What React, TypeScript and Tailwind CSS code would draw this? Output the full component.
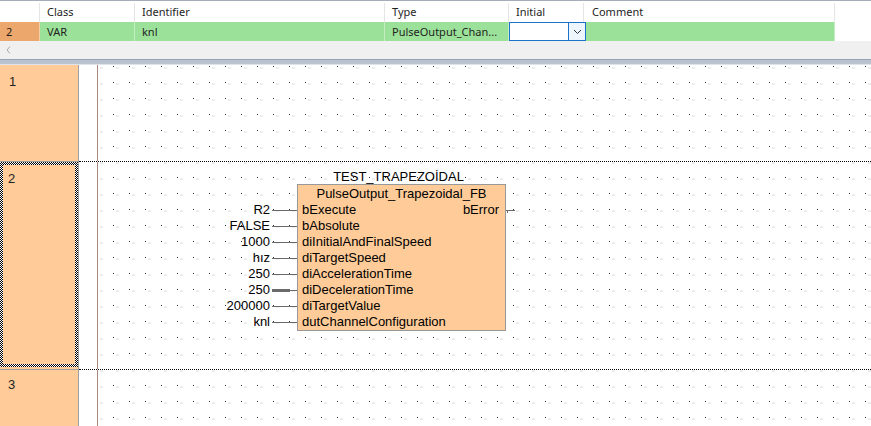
import React from 'react';

const cols = [
  { label: 'Class', w: 'w-[95px]', pl: 'pl-[7px]', value: 'VAR' },
  { label: 'Identifier', w: 'w-[250px]', pl: 'pl-[7px]', value: 'knl' },
  { label: 'Type', w: 'w-[124px]', pl: 'pl-[7px]', value: 'PulseOutput_Chan...' },
  { label: 'Initial', w: 'w-[75px]', pl: 'pl-[7px]', value: '' },
  { label: 'Comment', w: 'w-[251px]', pl: 'pl-[8px]', value: '' },
];

const pins: { value: string; name: string; selected?: boolean }[] = [
  { value: 'R2', name: 'bExecute' },
  { value: 'FALSE', name: 'bAbsolute' },
  { value: '1000', name: 'diInitialAndFinalSpeed' },
  { value: 'hız', name: 'diTargetSpeed' },
  { value: '250', name: 'diAccelerationTime' },
  { value: '250', name: 'diDecelerationTime', selected: true },
  { value: '200000', name: 'diTargetValue' },
  { value: 'knl', name: 'dutChannelConfiguration' },
];

// dotted canvas behind a network
const Dots: React.FC<{ id: string; oy: number }> = ({ id, oy }) => (
  <svg className="absolute inset-0 w-full h-full pointer-events-none">
    <defs>
      <pattern id={id} x={15} y={oy} width={16} height={16} patternUnits="userSpaceOnUse">
        <rect x={0} y={0} width={1} height={1} fill="#2e2e2e" />
        <rect x={3} y={1} width={3} height={2} fill="#ededed" />
      </pattern>
    </defs>
    <rect width="100%" height="100%" fill={`url(#${id})`} />
  </svg>
);

const Separator: React.FC = () => (
  <div className="flex h-px shrink-0">
    <div className="w-[79px] bg-[#a0a0a0]" />
    <div className="flex-1 border-t border-dotted border-black" />
  </div>
);

const FunctionBlock: React.FC = () => (
  <div className="absolute left-[102px] top-[8px] flex font-['Liberation_Sans',Arial,sans-serif] text-[13px] text-black">
    {/* constants on the inputs */}
    <div className="w-[70px] pt-[32px]">
      {pins.map((p, i) => (
        <div key={i} className="h-[16px] leading-[16px] text-right">{p.value}</div>
      ))}
    </div>
    {/* wires */}
    <div className="w-[27px] pt-[32px]">
      <svg width="27" height="128" className="block">
        {pins.map((p, i) =>
          p.selected ? (
            <g key={i}>
              <rect x="2" y={i * 16 + 7} width="18" height="3" fill="#6a6a6a" />
              <rect x="20" y={i * 16 + 8} width="7" height="1" fill="#6a6a6a" />
            </g>
          ) : (
            <rect key={i} x="2" y={i * 16 + 8} width="25" height="1" fill="#6a6a6a" />
          )
        )}
      </svg>
    </div>
    <div className="w-[209px] flex flex-col">
      <div className="h-[14px] leading-[14px] text-center pr-[6px]">TEST_TRAPEZOİDAL</div>
      <div className="border border-[#999] bg-[#ffcc99]">
        <div className="h-[17px] leading-[17px] text-center">PulseOutput_Trapezoidal_FB</div>
        {pins.map((p, i) => (
          <div key={i} className="h-[16px] leading-[16px] flex justify-between pl-[4px] pr-[6px]">
            <span>{p.name}</span>
            {i === 0 && <span>bError</span>}
          </div>
        ))}
      </div>
    </div>
    <div className="pt-[32px]">
      <svg width="10" height="16" className="block">
        <rect x="0" y="8" width="9" height="1" fill="#6a6a6a" />
        <rect x="1" y="8" width="1" height="3" fill="#6a6a6a" />
      </svg>
    </div>
  </div>
);

export default function App() {
  return (
    <div className="w-[871px] h-[426px] overflow-hidden bg-white flex flex-col">
      {/* declaration grid */}
      <div className="h-[22px] shrink-0 flex border-t border-[#a3acb9] pt-[2px] font-['Noto_Sans',sans-serif] text-[11px] text-[#1e1e1e]">
        <div className="w-[40px] border-r border-[#e5e5e5]" />
        {cols.map((c) => (
          <div key={c.label} className={`${c.w} ${c.pl} border-r border-[#e5e5e5] flex items-center`}>
            {c.label}
          </div>
        ))}
        <div className="flex-1" />
      </div>
      <div className="h-[19px] shrink-0 flex pt-[1px] bg-[#9ce19a] font-['Noto_Sans',sans-serif] text-[11px] text-[#1e1e1e]">
        <div className="w-[40px] -mt-[1px] bg-[#eca76c] border-r border-[#f6cfa8] pl-[6px] pt-[1px] flex items-center">2</div>
        {cols.map((c) =>
          c.label === 'Initial' ? (
            <div key={c.label} className={`${c.w} relative`}>
              <div className="absolute left-0 -top-[1px] w-[77px] h-[19px] border border-[#1a73c8] bg-white flex justify-end">
                <div className="w-[17px] h-full border-l border-[#1a73c8] bg-[#eef6fd] flex items-center justify-center">
                  <svg width="9" height="6" viewBox="0 0 9 6">
                    <path d="M1 1 L4.5 4.5 L8 1" fill="none" stroke="#333" strokeWidth="1" />
                  </svg>
                </div>
              </div>
            </div>
          ) : (
            <div key={c.label} className={`${c.w} ${c.pl} -mt-[1px] pt-[1px] border-r border-[#c4edc2] flex items-center`}>
              {c.value}
            </div>
          )
        )}
        <div className="flex-1 -mt-[1px] bg-white" />
      </div>
      <div className="h-[18px] shrink-0 bg-[#f0f0f0] flex items-center pl-[6px]">
        <svg width="5" height="8" viewBox="0 0 5 8">
          <path d="M4 0.5 L1 4 L4 7.5" fill="none" stroke="#a6a6a6" strokeWidth="1" />
        </svg>
      </div>
      <div className="h-[6px] shrink-0 bg-[#bac2cf] border-t border-[#97a2b4] border-b border-b-[#dfe4ea]" />

      {/* ladder editor */}
      <div className="flex-1 flex flex-col font-['Liberation_Sans',Arial,sans-serif] text-[13px] text-[#222]">
        <div className="flex h-[96px] shrink-0">
          <div className="w-[79px] shrink-0 bg-[#ffcc99] border-r border-[#a0a0a0] pl-[9px] pt-[10px] leading-[14px]">1</div>
          <div className="w-[18px] shrink-0" />
          <div className="w-px shrink-0 bg-[#a8897a]" />
          <div className="relative flex-1">
            <Dots id="dots1" oy={17} />
          </div>
        </div>
        <Separator />
        <div className="flex h-[207px] shrink-0">
          <div className="w-[79px] shrink-0 bg-[#ffcc99] border-r border-[#a0a0a0] pb-[2px]">
            <div className="h-full p-[3px] bg-[repeating-conic-gradient(#000_0_25%,#fff_0_50%)] bg-[length:2px_2px]">
              <div className="h-full bg-[#ffcc99] pl-[5px] pt-[7px] leading-[14px]">2</div>
            </div>
          </div>
          <div className="w-[18px] shrink-0" />
          <div className="w-px shrink-0 bg-[#a8897a]" />
          <div className="relative flex-1">
            <Dots id="dots2" oy={15} />
            <FunctionBlock />
          </div>
        </div>
        <Separator />
        <div className="flex flex-1">
          <div className="w-[79px] shrink-0 bg-[#ffcc99] border-r border-[#a0a0a0] pl-[8px] pt-[8px] leading-[14px]">3</div>
          <div className="w-[18px] shrink-0" />
          <div className="w-px shrink-0 bg-[#a8897a]" />
          <div className="relative flex-1">
            <Dots id="dots3" oy={15} />
          </div>
        </div>
      </div>
    </div>
  );
}
